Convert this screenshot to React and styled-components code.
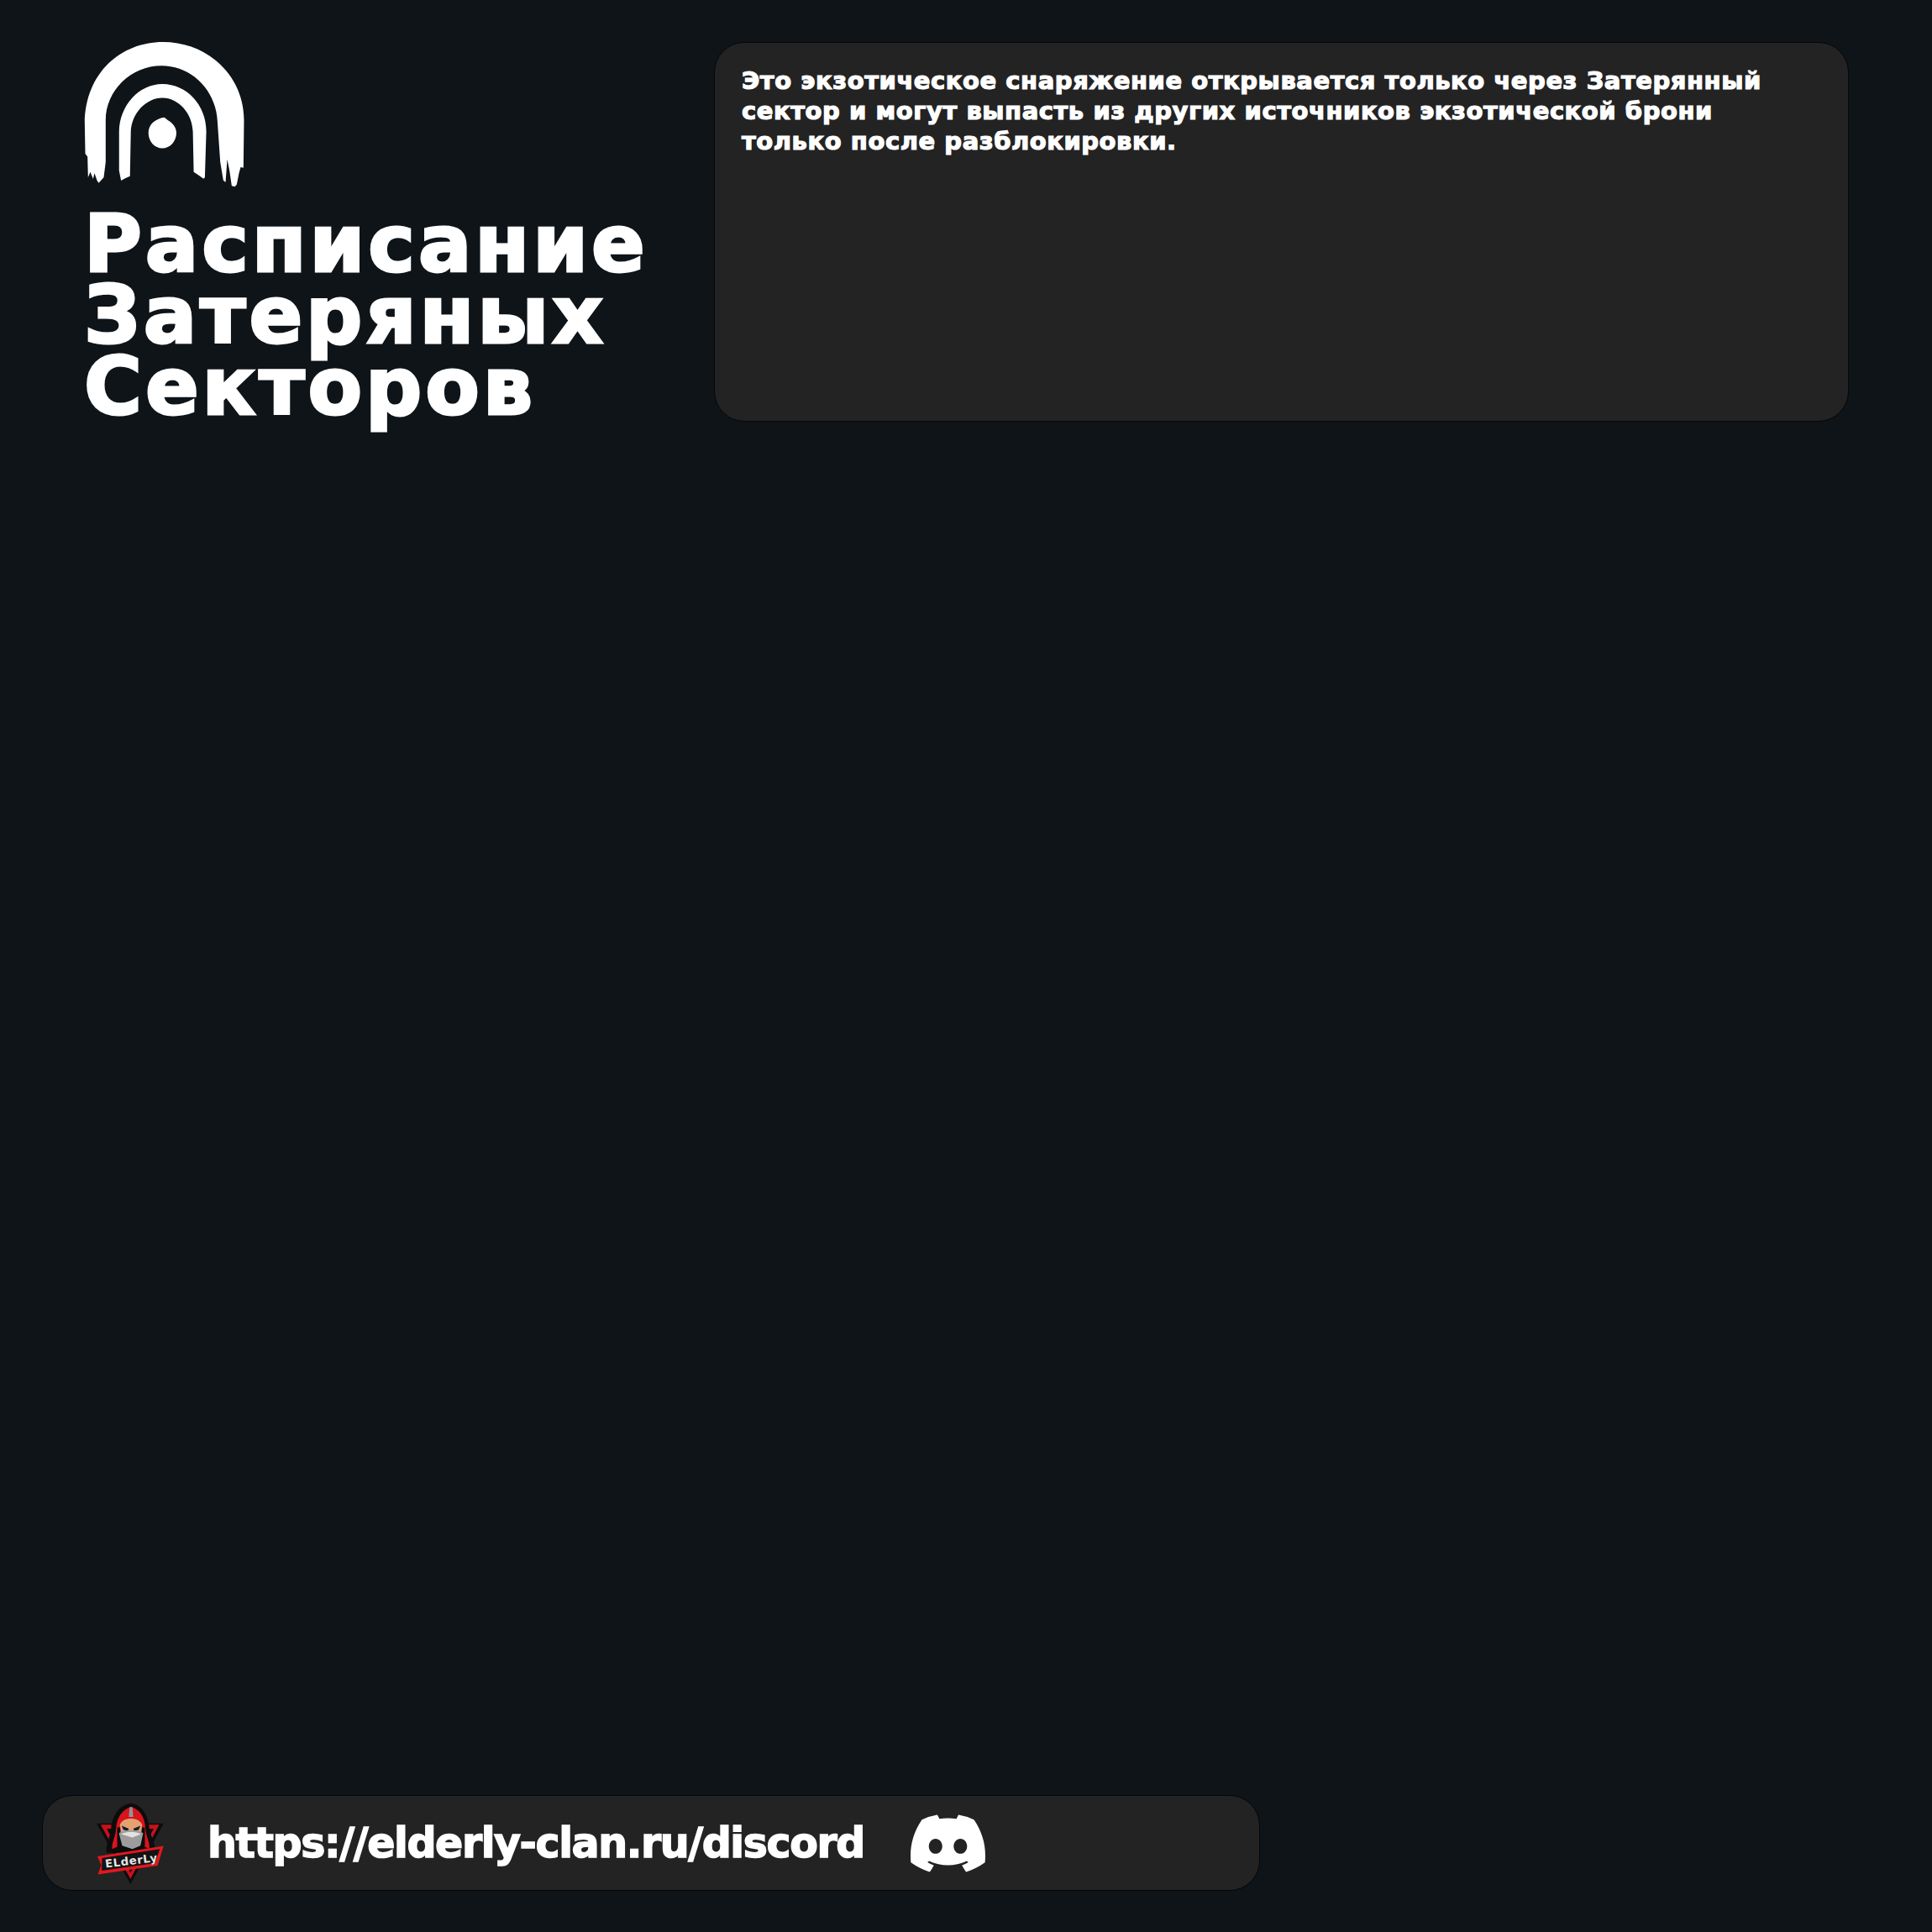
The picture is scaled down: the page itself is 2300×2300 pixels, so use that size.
import styled, { createGlobalStyle } from "styled-components";
import { SiDiscord } from "react-icons/si";

const GlobalStyle = createGlobalStyle`
  html, body {
    margin: 0;
    padding: 0;
    background-color: #0e1418;
  }
`;

const Page = styled.div`
  width: 2300px;
  height: 2300px;
  box-sizing: border-box;
  padding: 50px 99px 49px 50px;
  display: flex;
  flex-direction: column;
  justify-content: space-between;
  font-family: "DejaVu Sans", sans-serif;
  font-weight: 700;
  color: #fff;
`;

const Top = styled.div`
  display: flex;
  align-items: flex-start;
`;

const TitleColumn = styled.div`
  width: 800px;
  padding-left: 50px;
  box-sizing: border-box;
  flex-shrink: 0;
`;

const Emblem = styled.svg`
  display: block;
  width: 192px;
  height: 173px;
`;

const Title = styled.h1`
  margin: 25px 0 0;
  font-size: 94px;
  line-height: 85px;
  font-weight: 700;
  letter-spacing: 3.9px;
  -webkit-text-stroke: 3px #fff;
`;

const Panel = styled.div`
  width: 1351px;
  height: 452px;
  box-sizing: border-box;
  padding: 27px 32px;
  background-color: #232323;
  border: 1px solid #060606;
  border-radius: 36px;
  font-size: 29px;
  line-height: 36px;
  letter-spacing: 0.55px;
  -webkit-text-stroke: 1.2px #fff;
`;

const LinkBar = styled.div`
  width: 1450px;
  height: 114px;
  box-sizing: border-box;
  display: flex;
  align-items: center;
  padding-left: 63px;
  background-color: #232323;
  border: 1px solid #060606;
  border-radius: 36px;
`;

const ClanLogo = styled.svg`
  width: 84px;
  height: 97px;
  flex-shrink: 0;
`;

const LinkText = styled.span`
  margin-left: 49px;
  font-size: 49px;
  letter-spacing: -1.4px;
  white-space: nowrap;
  -webkit-text-stroke: 1.5px #fff;
`;

const DiscordIcon = styled(SiDiscord)`
  margin-left: 55px;
  width: 89px;
  height: 89px;
  color: #fff;
`;

export default function App() {
  return (
    <Page>
      <GlobalStyle />
      <Top>
        <TitleColumn>
          <Emblem viewBox="60 60 572 520" fill="#fff">
            <path d="M60 350C62 170 190 60 340 60C500 60 630 180 630 340L628 510L618 508L612 530L604 570L597 578L586 575L578 520L570 480L564 562L556 555L545 490L535 345C530 230 440 145 335 145C225 145 135 235 135 340L135 490L128 545L110 564L104 555L95 530L90 550L80 525L72 545L70 470L62 460Z" />
            <path d="M183 380C185 285 255 210 338 210C425 210 495 285 495 380L490 545L485 549L465 535L450 525L447 380C445 315 395 260 338 260C280 260 228 315 225 380L222 540L205 548L190 556L183 520Z" />
            <path d="M288 385C288 355 312 335 345 330L358 340C375 350 388 365 388 385C388 415 365 440 338 440C310 440 288 415 288 385Z" />
          </Emblem>
          <Title>
            Расписание
            <br />
            Затеряных
            <br />
            Секторов
          </Title>
        </TitleColumn>
        <Panel>
          Это экзотическое снаряжение открывается только через Затерянный
          <br />
          сектор и могут выпасть из других источников экзотической брони
          <br />
          только после разблокировки.
        </Panel>
      </Top>
      <LinkBar>
        <ClanLogo viewBox="75 40 250 295">
          <path d="M75 115H318L198 335Z" fill="#0c0c0c" />
          <path d="M90 120H302L198 316Z" fill="#c8121a" />
          <path d="M112 134H282L198 294Z" fill="#0c0c0c" />
          <path d="M128 146H268L198 278Z" fill="#8c1015" />
          <path d="M200 42C158 46 132 88 128 130C124 170 106 195 112 222L286 222C292 190 270 165 266 130C262 88 240 46 200 42Z" fill="#0c0c0c" />
          <path d="M200 56C172 62 148 92 146 132C144 165 128 190 132 208L150 200L150 130L250 130L250 200L266 208C270 185 254 165 252 132C250 92 230 62 200 56Z" fill="#d8141c" />
          <path d="M195 56H205L208 92H192Z" fill="#8f959c" />
          <path d="M160 120C168 90 230 90 240 120L236 165L164 165Z" fill="#e5a271" />
          <path d="M166 124L192 134L188 143L172 138Z" fill="#10202e" />
          <path d="M234 124L208 134L212 143L228 138Z" fill="#10202e" />
          <path d="M156 150C178 136 222 136 244 150L234 196L205 208L168 196Z" fill="#9c9c9c" />
          <path d="M164 154C184 143 216 143 236 154L205 166Z" fill="#e2e2e2" />
          <path d="M78 235L318 197L296 268L80 300L92 266Z" fill="#e3171f" />
          <path d="M95 241L304 208L287 259L94 286Z" fill="#131313" />
          <text x="108" y="276" fontFamily="'DejaVu Sans', sans-serif" fontWeight="700" fontSize="40" fill="#e6e6e6" transform="rotate(-7 108 276)" letterSpacing="2">
            ELderLy
          </text>
        </ClanLogo>
        <LinkText>https://elderly-clan.ru/discord</LinkText>
        <DiscordIcon />
      </LinkBar>
    </Page>
  );
}
